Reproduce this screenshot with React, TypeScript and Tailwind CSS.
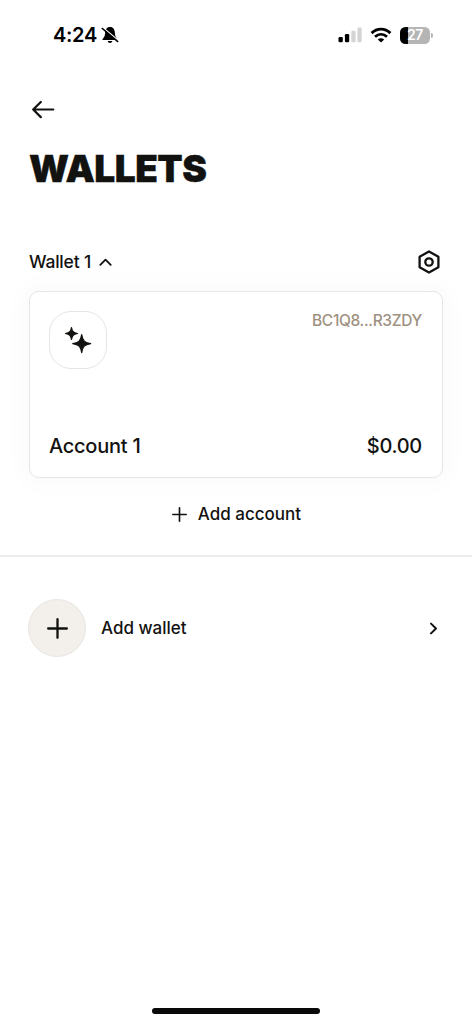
import React from "react";

function StatusBar() {
  return (
    <header className="flex h-[70px] items-center justify-between pl-[53px] pr-[39px] text-black">
      <div className="flex items-center gap-[4px]">
        <span className="text-[20px] leading-6 font-semibold tracking-[-0.3px]">4:24</span>
        <svg className="h-[20px] w-[18px]" viewBox="0 0 18 20" fill="none">
          <path d="M9 2C5.6 2 4.2 4.7 4.1 8c-.1 3.5-1.4 4.7-2.5 6.1-.4.5-.1 1 .5 1h13.8c.6 0 .9-.5.5-1-1.1-1.4-2.4-2.6-2.5-6.1C13.8 4.7 12.4 2 9 2Z" fill="currentColor" />
          <path d="M6.6 16.1h4.8c-.3 1.3-1.2 2-2.4 2s-2.1-.7-2.4-2Z" fill="currentColor" />
          <path d="M1.6 2.2 17.4 15.6" stroke="white" strokeWidth="1.3" />
          <path d="M1.2 3.4 16.8 16.6" stroke="currentColor" strokeWidth="1.4" strokeLinecap="round" />
        </svg>
      </div>
      <div className="flex items-center">
        <svg className="h-[16px] w-[24px]" viewBox="0 0 24 16">
          <rect x="0.5" y="10" width="4.3" height="5.3" rx="1.2" fill="black" />
          <rect x="6.9" y="7" width="4.3" height="8.3" rx="1.2" fill="black" />
          <rect x="13.3" y="3.8" width="4.3" height="11.5" rx="1.2" fill="#d4d4d4" />
          <rect x="19.4" y="0.6" width="4.3" height="14.7" rx="1.2" fill="#d4d4d4" />
        </svg>
        <svg className="ml-[8px] h-[16px] w-[22px]" viewBox="0 0 22 16" fill="none" stroke="black" strokeWidth="2.9">
          <path d="M1.6 6.1C7.1.8 14.9.8 20.4 6.1" />
          <path d="M5 9.8c3.6-3.3 8.4-3.3 12 0" />
          <path d="M11 15.6 7.8 12.5c1.8-1.6 4.6-1.6 6.4 0Z" fill="black" stroke="none" />
        </svg>
        <div className="ml-[8px] flex h-[17px] w-[30px] items-center justify-center rounded-[5.5px] bg-[linear-gradient(90deg,#000_0_8px,#b5b5b5_8px)] text-[14px] leading-none font-semibold tracking-[-0.4px] text-white">
          27
        </div>
        <span className="ml-[1px] h-[5px] w-[2px] rounded-r-full bg-[#b5b5b5]" />
      </div>
    </header>
  );
}

function Sparkles() {
  return (
    <svg className="mr-[1px] h-[30px] w-[30px]" viewBox="0 0 30 30" fill="#121210" stroke="#121210" strokeWidth="1.2" strokeLinejoin="round">
      <path d="M8.5 2.5c.7 4.1 1.9 5.3 6 6-4.1.7-5.3 1.9-6 6-.7-4.1-1.9-5.3-6-6 4.1-.7 5.3-1.9 6-6Z" />
      <path d="M18.7 9.6c1 6.2 2.8 8 9 9-6.2 1-8 2.8-9 9-1-6.2-2.8-8-9-9 6.2-1 8-2.8 9-9Z" />
    </svg>
  );
}

function Plus({ className }: { className: string }) {
  return (
    <svg className={className} viewBox="0 0 20 20" fill="none" stroke="#121210" strokeWidth="2.2" strokeLinecap="round">
      <path d="M10 1.1v17.8M1.1 10h17.8" />
    </svg>
  );
}

export default function App() {
  return (
    <div className="flex h-[1024px] w-[472px] flex-col bg-white font-['Inter','Liberation_Sans',sans-serif] font-medium text-[#121210]">
      <StatusBar />
      <main className="flex flex-1 flex-col">
        <button aria-label="Back" className="mt-[30px] ml-[32px] h-[20px] w-[23px]">
          <svg className="h-[20px] w-[23px]" viewBox="0 0 23 20" fill="none" stroke="currentColor" strokeWidth="2.2" strokeLinecap="round" strokeLinejoin="round">
            <path d="M8.8 2 1.2 9.5l7.6 7.6M1.5 9.5h19.8" />
          </svg>
        </button>
        <h1 className="mt-[25px] ml-[29px] h-[48px] text-[37px] leading-[48px] font-black tracking-[-0.5px] [-webkit-text-stroke:0.4px_#121210]">WALLETS</h1>

        <section className="mt-[55px] px-[29px]">
          <div className="flex h-[28px] items-center justify-between">
            <button className="flex items-center gap-[8px] text-[17.5px] leading-6 tracking-[-0.2px]">
              Wallet 1
              <svg className="h-[8px] w-[13px]" viewBox="0 0 13 8" fill="none" stroke="currentColor" strokeWidth="1.8" strokeLinecap="round" strokeLinejoin="round">
                <path d="M1.3 6.8 6.5 1.6l5.2 5.2" />
              </svg>
            </button>
            <button aria-label="Wallet settings" className="mr-[2px]">
              <svg className="h-[24px] w-[24px]" viewBox="0 0 24 24" fill="none" stroke="currentColor" strokeWidth="2.3" strokeLinejoin="round">
                <path d="m12 1.5 9.4 5.2v10.6L12 22.5l-9.4-5.2V6.7Z" />
                <circle cx="12" cy="12" r="3.7" />
              </svg>
            </button>
          </div>

          <div className="mt-[15px] flex h-[187px] flex-col justify-between rounded-[10px] border border-[#e5e5e5] bg-white pt-[19px] pr-[20px] pb-[17px] pl-[19px] shadow-[0_0_24px_6px_rgba(0,0,0,0.022)]">
            <div className="flex items-start justify-between">
              <div className="flex h-[58px] w-[58px] items-center justify-center rounded-[22px] border border-[#e8e5e0]">
                <Sparkles />
              </div>
              <span className="text-[15.5px] leading-[20px] tracking-[-0.35px] text-[#9f9182]">BC1Q8...R3ZDY</span>
            </div>
            <div className="flex items-center justify-between text-[20px] leading-[28px]">
              <span className="tracking-[-0.25px]">Account 1</span>
              <span className="tracking-[-0.3px]">$0.00</span>
            </div>
          </div>

          <button className="mx-auto mt-[22px] flex h-[28px] items-center gap-[11px] pl-[1px] text-[17px] leading-6">
            <Plus className="h-[15px] w-[15px]" />
            Add account
          </button>
        </section>

        <hr className="mt-[27px] border-t-2 border-[#ececec]" />

        <button className="mt-[42px] flex h-[58px] items-center pr-[34px] pl-[28px] text-[17px] leading-6">
          <span className="flex h-[58px] w-[58px] items-center justify-center rounded-full border border-[#e9e5e0] bg-[#f3f0eb]">
            <Plus className="h-[21px] w-[21px]" />
          </span>
          <span className="ml-[15px]">Add wallet</span>
          <svg className="ml-auto h-[13px] w-[9px]" viewBox="0 0 9 13" fill="none" stroke="currentColor" strokeWidth="2" strokeLinecap="round" strokeLinejoin="round">
            <path d="m2 1.6 5 4.9-5 4.9" />
          </svg>
        </button>
        <div className="mx-auto mt-auto mb-[10px] h-[6px] w-[168px] rounded-full bg-[#090909]" />
      </main>
    </div>
  );
}
